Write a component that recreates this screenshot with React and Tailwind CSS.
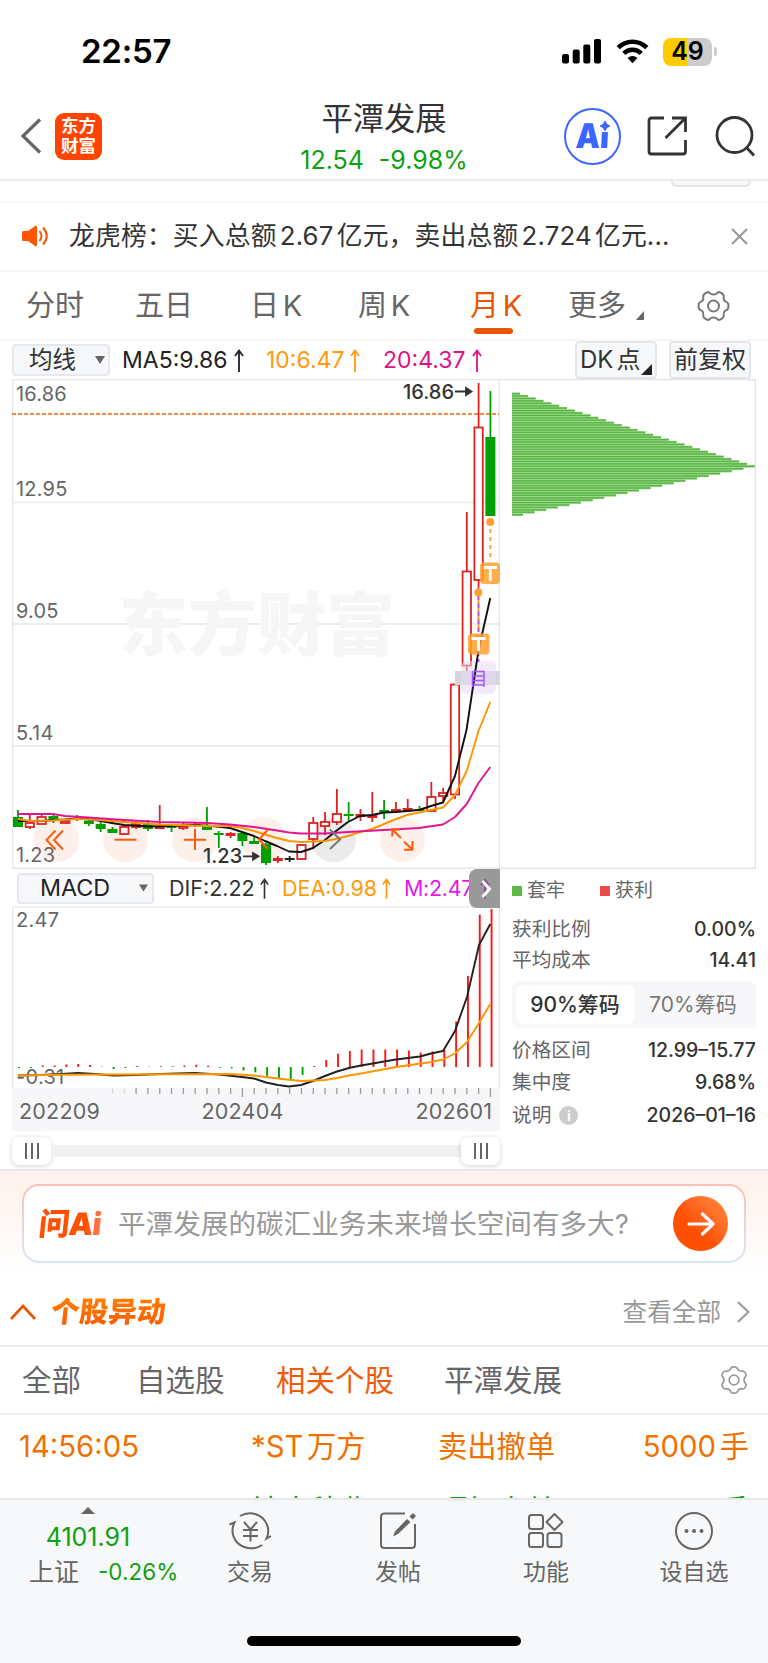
import React from 'react';

// [wick top, body top, body bottom, wick bottom, kind]: u = hollow red, r = solid red, g = green, k = flat
const CANDLES = [
    [810, 817, 827, 827, 'g'], [814, 823, 827, 829, 'u'], [814, 817, 824, 824, 'u'], [815, 816, 821, 823, 'g'],
    [820, 821, 823, 823, 'u'], [815, 818, 820, 821, 'g'], [820, 821, 824, 826, 'g'], [822, 824, 829, 832, 'g'],
    [827, 829, 833, 833, 'g'], [826, 827, 834, 834, 'u'], [820, 824, 827, 829, 'u'], [820, 824, 829, 831, 'g'],
    [805, 826, 829, 829, 'r'], [825, 826, 828, 832, 'g'], [822, 826, 828, 830, 'u'], [822, 824, 826, 827, 'r'],
    [807, 827, 830, 830, 'g'], [831, 833, 835, 848, 'g'], [832, 833, 836, 838, 'r'], [832, 833, 841, 846, 'g'],
    [837, 841, 844, 844, 'g'], [843, 844, 863, 865, 'g'], [856, 858, 861, 863, 'r'], [856, 858, 860, 862, 'k'],
    [844, 845, 859, 860, 'u'], [817, 823, 839, 849, 'u'], [812, 822, 826, 835, 'u'], [789, 814, 822, 825, 'u'],
    [802, 814, 816, 822, 'g'], [809, 814, 817, 821, 'r'], [792, 815, 818, 822, 'r'], [800, 810, 812, 819, 'g'],
    [802, 809, 812, 812, 'r'], [799, 808, 811, 811, 'r'], [806, 809, 811, 811, 'g'], [782, 797, 811, 812, 'u'],
    [788, 793, 796, 801, 'u'], [684, 684.5, 794.5, 799, 'u'], [512, 571.5, 665.5, 671, 'u'], [383, 427.5, 580, 587, 'u'],
    [391, 437, 516, 516, 'g'],
];

const MA5 = '18,821 40,821 65,819.5 77,818.5 95,820 112,823 124,825 150,826.5 171,826 195,825 212,826 230,828 242,832 254,836 265,841 277,846 289,851.5 301,852 313,848 325,840 336,831 348,822 360,816 372,815 384,812.5 396,812 419,810 431,806 443,802.5 455,776 466.5,730 478.5,650 490.3,598';
const MA10 = '18,819 30,821 53,820.5 77,819 100,820 124,822 160,824.5 207,826 230,826 242,828 254,831 265,834.5 277,838 289,841 301,842 325,841 336,839 348,836 360,832 372,829 384,824 396,819 407,815 419,812.5 431,810 443,807.5 455,795 466.7,771 478.5,731 490.3,702';
const MA20 = '18,814 53,814 65,816 88,817.5 124,820 160,822 207,823 230,824.5 254,827 277,830.5 289,832.5 301,833.5 325,833.5 348,832 384,830 419,828 443,824.5 455,817 466.7,804 478.5,783 490.3,767';

const MACD_BARS = [
    -1, -1, 1.5, 1.5, 2.5, 3, 2, 0.4, -2, -1, 1, 0.3, 0.7, 0.7, 1.5, 2.3, 1.3, -0.7, -1.3, -3.5, -5.3, -9.5, -12, -13, -8,
    1, 7, 13.3, 16, 17.5, 17.5, 17.5, 17.5, 16.5, 14.5, 15.5, 17, 45.5, 91, 152.5, 158,
];
const DIF = '18,1075.5 40,1075 62,1074 78,1073 95,1074 113,1075.5 136,1075 160,1074 195,1073 219,1074.5 242,1077 254,1078.5 266,1082.5 278,1085 289,1086.5 301,1085 313,1081 325,1076 337,1071.5 349,1068 361,1065.5 373,1063.5 384,1061.5 396,1059.5 420,1056.5 431,1053.5 443,1051 455,1031 467,997 479,945 490.3,924';
const DEA = '18,1075.5 60,1074.8 230,1074 254,1075.5 278,1078.5 301,1081 325,1080 337,1078 349,1075.5 361,1073.5 396,1067 431,1062 443,1059.5 455,1053.5 467,1042 479,1023 490.3,1004';

const STEP = 11.81;

const StatusBar = () => (
    <div className="flex h-[97px] shrink-0 items-center pl-[81px] pr-[51px] text-black">
        <span className="mt-[6px] text-[33px] font-semibold leading-none tracking-[-0.2px]">22:57</span>
        <div className="ml-auto mt-[6px] flex items-center">
            <svg className="h-[25px] w-[39px]" viewBox="0 0 39 25">
                <rect x="0" y="15" width="7" height="9.5" rx="2" />
                <rect x="10.7" y="10.5" width="7" height="14" rx="2" />
                <rect x="21.3" y="5.5" width="7" height="19" rx="2" />
                <rect x="32" y="0" width="7" height="24.5" rx="2" />
            </svg>
            <svg className="ml-[15px] h-[25px] w-[33px]" viewBox="0 0 33 25">
                <path d="M2.2 8.6a20.3 20.3 0 0 1 28.6 0" fill="none" stroke="black" strokeWidth="4.6" />
                <path d="M7.8 14.4a12.3 12.3 0 0 1 17.4 0" fill="none" stroke="black" strokeWidth="4.4" />
                <path d="M11.6 18.9a7 7 0 0 1 9.8 0L16.5 24.3z" />
            </svg>
            <div className="ml-[14px] flex h-[28px] w-[49px] items-center justify-center rounded-[8px] bg-linear-to-r from-[#ffcc00] from-50% to-[#cccccc] to-50%">
                <span className="text-[25px] font-semibold leading-none">49</span>
            </div>
            <span className="ml-[2px] h-[9px] w-[3px] rounded-r-full bg-[#cccccc]"></span>
        </div>
    </div>
);

const Header = () => (
    <div className="flex h-[84px] shrink-0 items-center border-b-2 border-[#ededee] pb-[4px] pl-[20px] pr-[11px] text-[#333333]">
        <svg className="h-[36px] w-[22px]" viewBox="0 0 22 36" fill="none" stroke="#666666" strokeWidth="3.2">
            <path d="M20 1.5L3 18l17 16.5" />
        </svg>
        <div className="ml-[13px] flex h-[47px] w-[47px] flex-col items-center justify-center rounded-[9px] bg-[#ff4400] text-[17.500px] font-bold leading-[20px] text-white">
            <span>东方</span>
            <span>财富</span>
        </div>
        <div className="ml-[198px] mt-[5px] flex w-[168px] flex-col items-center">
            <span className="text-[31.3px] leading-[38px]">平潭发展</span>
            <span className="mt-[5px] flex gap-[15px] whitespace-nowrap text-[25px] leading-[34px] text-[#0fa00f]">
                <span>12.54</span>
                <span>-9.98%</span>
            </span>
        </div>
        <div className="relative ml-[96px] flex h-[57px] w-[57px] items-center justify-center rounded-full border-[2.5px] border-[#3b66ff] text-[#3b66ff]">
            <span className="-skew-x-3 scale-x-90 text-[34px] font-black leading-none">Ai</span>
            <svg className="absolute left-[33px] top-[10px] h-[12px] w-[12px]" viewBox="0 0 12 12">
                <rect width="12" height="12" fill="white" />
                <path d="M6 1q1 4 5 5q-4 1-5 5q-1-4-5-5q4-1 5-5z" fill="#3b66ff" stroke="#3b66ff" />
            </svg>
        </div>
        <svg className="ml-[26px] h-[40px] w-[41px]" viewBox="0 0 41 40" fill="none" stroke="#333333" strokeWidth="2.8">
            <path d="M17 2H4.500Q2 2 2 4.500V35.500Q2 38 4.500 38H36Q38.500 38 38.500 35.500V24" />
            <path d="M25 2h13.500v14M38.500 2L18.500 22" />
        </svg>
        <svg className="ml-[27px] h-[41px] w-[41px]" viewBox="0 0 41 41" fill="none" stroke="#333333" strokeWidth="2.8">
            <circle cx="19.500" cy="19" r="17.500" />
            <path d="M31.500 31.500L39 39.500" />
        </svg>
    </div>
);

const Notice = () => (
    <div className="flex h-[91px] shrink-0 flex-col">
        <div className="flex h-[20px] justify-end pr-[17px]">
            <div className="h-[6px] w-[80px] rounded-b-[6px] border-2 border-t-0 border-[#e3e5eb] bg-[#f7f8fa]"></div>
        </div>
        <div className="flex h-[71px] items-center border-y-2 border-[#f6f6f7] pb-[1px] pl-[22px] pr-[20px]">
            <svg className="h-[22px] w-[27px]" viewBox="0 0 27 22" fill="#ff5500">
                <path d="M0 7.500Q0 6 1.500 6H6L13 1q2-1 2 1v18q0 2-2 1L6 16H1.500Q0 16 0 14.500z" />
                <path d="M17.500 6q4 5 0 10M21 2.500q7.500 8.500 0 17" fill="none" stroke="#ff5500" strokeWidth="2" />
            </svg>
            <span className="ml-[20px] text-[25.8px] tracking-[0.15px] text-[#333333] [text-autospace:normal]">龙虎榜：买入总额2.67亿元，卖出总额2.724亿元...</span>
            <svg className="ml-auto h-[17px] w-[17px]" viewBox="0 0 17 17" stroke="#999999" strokeWidth="2">
                <path d="M1 1l15 15M16 1L1 16" />
            </svg>
        </div>
    </div>
);

const Gear = ({ className, stroke }) => (
    <svg className={className} viewBox="0 0 32 32" fill="none" stroke={stroke} strokeWidth="2" strokeLinejoin="round">
        <path d="M16 4.500Q18.500 4.500 20 2.800Q21.200 1.600 23 2.600L25 3.900Q26.600 5 26.200 7Q25.800 9.500 27.500 11.200Q30.500 12.500 30.800 14Q31 16 30.800 18Q30.500 19.500 27.500 20.800Q25.800 22.500 26.200 25Q26.600 27 25 28.100L23 29.400Q21.200 30.400 20 29.200Q18.500 27.500 16 27.500Q13.500 27.500 12 29.200Q10.800 30.400 9 29.400L7 28.100Q5.400 27 5.800 25Q6.200 22.500 4.500 20.800Q1.500 19.500 1.200 18Q1 16 1.200 14Q1.500 12.500 4.500 11.200Q6.200 9.500 5.800 7Q5.400 5 7 3.900L9 2.600Q10.800 1.600 12 2.800Q13.500 4.500 16 4.500z" />
        <circle cx="16" cy="16" r="5.500" />
    </svg>
);

const PeriodTabs = () => (
    <div className="flex h-[69px] shrink-0 items-center border-b-2 border-[#f6f6f7] pl-[26px] text-[29px] text-[#666666] [text-autospace:normal]">
        <span className="w-[109px]">分时</span>
        <span className="w-[115px]">五日</span>
        <span className="w-[108px]">日K</span>
        <span className="w-[112px]">周K</span>
        <span className="relative w-[98px] text-[#ea5504]">
            月K
            <span className="absolute left-[4px] top-[44px] h-[6px] w-[39px] rounded-[3px] bg-[#ea5504]"></span>
        </span>
        <span>更多</span>
        <svg className="ml-[10px] mt-[20px] h-[9px] w-[8px]" viewBox="0 0 8 9" fill="#666666">
            <path d="M8 0v9H0z" />
        </svg>
        <Gear className="ml-[53px] h-[32px] w-[33px]" stroke="#777777" />
    </div>
);

const UpArrow = ({ className }) => (
    <svg className={className} viewBox="0 0 10 23" fill="none" stroke="currentColor" strokeWidth="1.8">
        <path d="M5 23V1.500M1 7l4-5.500L9 7" />
    </svg>
);

const AverageRow = () => (
    <div className="flex h-[38px] shrink-0 pl-[12px] pr-[16px] text-[23px] [text-autospace:normal]">
        <div className="mt-[3px] flex h-[32px] w-[98px] shrink-0 items-center rounded-[4px] border-2 border-[#e6e8ee] bg-[#f7f8fa] pl-[15px] text-[23.500px] text-[#333333]">
            均线
            <svg className="ml-[19px] h-[8px] w-[10px]" viewBox="0 0 10 8" fill="#666666">
                <path d="M0 0h10L5 8z" />
            </svg>
        </div>
        <div className="flex w-[453px] shrink-0 items-center pl-[12px]">
            <span className="w-[112px] text-[#222222]">MA5:9.86</span>
            <UpArrow className="h-[23px] w-[10px] text-[#222222]" />
            <span className="ml-[22px] w-[84px] text-[#ff9a0c]">10:6.47</span>
            <UpArrow className="h-[23px] w-[10px] text-[#ff9a0c]" />
            <span className="ml-[23px] w-[89px] text-[#dd1188]">20:4.37</span>
            <UpArrow className="h-[23px] w-[10px] text-[#dd1188]" />
        </div>
        <div className="relative ml-[12px] flex w-[82px] shrink-0 items-center whitespace-nowrap rounded-[4px] border-2 border-[#e3e5eb] bg-[#f7f8fa] pl-[3px] text-[24px] text-[#333333]">
            DK点
            <svg className="absolute bottom-[2px] right-[3px] h-[11px] w-[11px]" viewBox="0 0 11 11" fill="#222222">
                <path d="M11 0v11H0z" />
            </svg>
        </div>
        <div className="ml-[12px] flex w-[82px] shrink-0 items-center justify-center whitespace-nowrap rounded-[4px] border-2 border-[#e3e5eb] bg-[#f7f8fa] text-[24px] text-[#333333]">前复权</div>
    </div>
);

const Candle = ({ data, x }) => {
    const [top, bodyTop, bodyBottom, bottom, kind] = data;
    const color = kind === 'g' ? '#009f00' : kind === 'k' ? '#222222' : '#dd2222';
    return (
        <g stroke={color} strokeWidth="1.800">
            <path d={`M${x} ${top}V${bodyTop}M${x} ${bodyBottom}V${bottom}`} />
            {kind === 'u' ? (
                <rect x={x - 4.2} y={bodyTop} width="8.400" height={bodyBottom - bodyTop} fill="white" />
            ) : (
                <rect x={x - 5} y={bodyTop} width="10" height={bodyBottom - bodyTop} fill={color} stroke="none" />
            )}
        </g>
    );
};

const PriceChart = () => (
    <svg className="h-[490px] w-[488px] shrink-0 text-[20px]" viewBox="12 379 488 490">
        <g stroke="#e4e9ef" strokeWidth="1.600" fill="none">
            <path d="M12 379.500H500M12.500 379V869M499.500 379V869M12 868.300H500" />
            <path d="M12 502.500H500M12 624H500M12 746H500" />
        </g>
        <text x="119" y="650" fontSize="69" fontWeight="900" fill="#f6f6f7">东方财富</text>
        <path d="M12 414H499" stroke="#f08a4b" strokeWidth="2" strokeDasharray="4 2" />
        <g fill="#fdf0ea">
            <circle cx="56.500" cy="839.700" r="22.500" />
            <circle cx="125.500" cy="839.700" r="22.500" />
            <circle cx="194.500" cy="839.700" r="22.500" />
            <circle cx="264" cy="839.700" r="22.500" />
            <circle cx="333.500" cy="839.700" r="22.500" fill="#ebebeb" />
            <circle cx="402.500" cy="839.700" r="22.500" />
        </g>
        <g fill="#666666" letterSpacing="0.200">
            <text x="16" y="401">16.86</text>
            <text x="16" y="495.500">12.95</text>
            <text x="16" y="617.500">9.05</text>
            <text x="16" y="740">5.14</text>
            <text x="16" y="861.500">1.23</text>
        </g>
        {CANDLES.map((c, i) => (
            <Candle key={i} data={c} x={18 + i * STEP} />
        ))}
        <rect x="455" y="671" width="44.500" height="14" fill="#d3d6dc" />
        <rect x="461" y="661" width="35" height="33" rx="6" fill="#e9d9fb" fillOpacity="0.550" />
        <path d="M478.500 587V662" stroke="#a855f7" strokeWidth="2" strokeDasharray="5 3" />
        <path d="M478.500 600V630M490.300 529V560" stroke="#ffa02e" strokeWidth="2" strokeDasharray="4 4" />
        <g fill="none" strokeWidth="1.900" strokeLinejoin="round">
            <polyline points={MA5} stroke="#111111" />
            <polyline points={MA10} stroke="#ff9500" />
            <polyline points={MA20} stroke="#e01590" />
        </g>
        <g fill="#ff9f2e">
            <circle cx="490.300" cy="522" r="4" />
            <circle cx="478.300" cy="592.500" r="4" />
            <rect x="480" y="562.500" width="20" height="21.500" rx="4" fillOpacity="0.850" />
            <rect x="468" y="633.500" width="21.500" height="21" rx="4" fillOpacity="0.850" />
        </g>
        <g stroke="white" strokeWidth="2.800" fill="none">
            <path d="M483.500 567.500H497M490.300 567.500V581" />
            <path d="M471.500 638.500H485.500M478.500 638.500V651" />
        </g>
        <path d="M472.500 671.500H484V687M472.500 671.500V687M472.500 676H484M472.500 680.500H484M472.500 685H484" stroke="#a855f7" strokeWidth="1.500" fill="none" />

        {/* Chart controls */}
        <g stroke="#ff5a0a" strokeWidth="2" fill="none">
            <path d="M55.500 830.500L46.500 840L55.500 849.500M63 830.500L54 840L63 849.500" />
            <path d="M114.500 839.700H136.500" />
            <path d="M184 839.700H206M195 829V850" />
            <path d="M268 829.500L259 839.500L268 849" />
            <path d="M392.300 836.500V829.500H400M392.300 829.500L401 838M412.500 841V849.700H404M412.500 849.700L404 841.500" />
        </g>
        <path d="M330 829.500L340 839.500L330 849" stroke="#777777" strokeWidth="2" fill="none" />

        <g fill="#333333" stroke="none" className="font-medium">
            <text x="403" y="399">16.86</text>
            <text x="203" y="863">1.23</text>
        </g>
        <g stroke="#333333" strokeWidth="1.800" fill="#333333">
            <path d="M455 391.500H471M466 388l5.500 3.500l-5.500 3.500z" />
            <path d="M243 856.300H258M253 853l5.500 3.300l-5.500 3.300z" />
        </g>
    </svg>
);

// 51 price levels; volume peaks at level 30
const ChipChart = () => (
    <svg className="h-[490px] w-[256px] shrink-0" viewBox="500 379 256 490">
        <path d="M500 379.500H755.500V868.300H500" fill="none" stroke="#e0e3e9" strokeWidth="1.600" />
        {Array.from({ length: 51 }, (_, i) => {
            const width = i <= 30 ? 8 + i * 7.83 : 243 - (i - 30) * 11.6;
            const y = 392.5 + i * 2.42;
            return (
                <g key={i}>
                    <rect x="512" y={y} width={width} height="2.420" fill="#82cb6f" />
                    <rect x="512" y={y + 0.6} width={width} height="1.100" fill="#56b541" />
                </g>
            );
        })}
    </svg>
);

const MacdRow = () => (
    <div className="relative flex h-[39px] items-center border-b-2 border-[#efeff1] pt-[1px] text-[21.500px]">
        <div className="ml-[5px] flex h-[31px] w-[137px] shrink-0 items-center rounded-[4px] border-2 border-[#e6e8ee] bg-[#f7f8fa] pl-[21px] text-[23.300px] text-[#222222]">
            MACD
            <svg className="ml-auto mr-[4px] h-[8px] w-[9px]" viewBox="0 0 10 8" fill="#666666">
                <path d="M0 0h10L5 8z" />
            </svg>
        </div>
        <span className="ml-[15px] w-[91px] shrink-0 text-[#333333]">DIF:2.22</span>
        <UpArrow className="h-[21px] w-[9px] shrink-0 text-[#333333]" />
        <span className="ml-[13px] w-[100px] shrink-0 text-[#ff9a0c]">DEA:0.98</span>
        <UpArrow className="h-[21px] w-[9px] shrink-0 text-[#ff9a0c]" />
        <span className="ml-[13px] w-[75px] shrink-0 tracking-[-0.3px] text-[#e517e5]">M:2.47</span>
        <div className="absolute right-0 top-0 flex h-[39px] w-[31px] items-center justify-center rounded-l-[8px] bg-[#999999]">
            <svg className="h-[23px] w-[22px]" viewBox="0 0 22 23" fill="none">
                <path d="M11 22V3M7 8l4-5l4 5" stroke="#8a4a8f" strokeWidth="1.8" />
                <path d="M8.500 4l7 8l-7 8" stroke="white" strokeWidth="3" />
            </svg>
        </div>
    </div>
);

const MacdChart = () => (
    <svg className="h-[223px] w-[488px] shrink-0" viewBox="12 908 488 223">
        <path d="M12.500 907V1088M499.500 907V1088" stroke="#e4e6eb" strokeWidth="1.600" />
        <rect x="12" y="1088" width="488" height="43" fill="#f7f7fa" />
        {MACD_BARS.map((v, i) => (
            <rect key={i} x={18.2 + i * STEP} y={v > 0 ? 1067 - v : 1067} width="1.900" height={Math.abs(v)} fill={v > 0 ? '#ff1414' : '#009f00'} />
        ))}
        <g fill="#666666" fontSize="20" letterSpacing="0.300">
            <text x="16" y="926.500">2.47</text>
            <text x="16" y="1083.500">-0.31</text>
        </g>
        <g fill="none" strokeWidth="1.900" strokeLinejoin="round">
            <polyline points={DIF} stroke="#222222" />
            <polyline points={DEA} stroke="#ff9500" />
        </g>
        {Array.from({ length: 33 }, (_, i) => {
            const long = i === 11 || i === 32;
            return <path key={i} d={`M${112.5 + i * STEP} 1088v${long ? 9 : 6}`} stroke={i < 2 ? '#dddddd' : '#999999'} strokeWidth="1.300" />;
        })}
        <g fill="#666666" fontSize="21.500" letterSpacing="0.200">
            <text x="19" y="1119">202209</text>
            <text x="201.500" y="1119">202404</text>
            <text x="415.500" y="1119">202601</text>
        </g>
    </svg>
);

const SliderHandle = () => (
    <div className="flex h-[28px] w-[39px] items-center justify-center gap-[4px] rounded-[7px] bg-white shadow-[0_1px_5px_rgba(0,0,0,0.18)]">
        <span className="h-[16px] w-[2px] bg-[#666666]"></span>
        <span className="h-[16px] w-[2px] bg-[#666666]"></span>
        <span className="h-[16px] w-[2px] bg-[#666666]"></span>
    </div>
);

const StatRow = ({ label, value, info, className }) => (
    <div className={`flex items-center justify-between text-[19.700px] ${className}`}>
        <span className="flex items-center text-[#666666]">
            {label}
            {info && <span className="ml-[8px] flex h-[19px] w-[19px] items-center justify-center rounded-full bg-[#cccccc] text-[14px] font-bold text-white">i</span>}
        </span>
        <span className="text-[19.500px] font-medium text-[#333333]">{value}</span>
    </div>
);

const ChipStats = () => (
    <div className="flex w-[244px] flex-col pt-[9px]">
        <div className="flex h-[26px] items-center text-[19px] text-[#666666]">
            <span className="h-[10px] w-[10px] bg-[#5cb947]"></span>
            <span className="ml-[5px]">套牢</span>
            <span className="ml-[35px] h-[10px] w-[10px] bg-[#ea4a4a]"></span>
            <span className="ml-[5px]">获利</span>
        </div>
        <StatRow label="获利比例" value="0.00%" className="mt-[10px] h-[31px]" />
        <StatRow label="平均成本" value="14.41" className="h-[31px]" />
        <div className="mt-[5px] flex h-[47px] items-center rounded-[8px] bg-[#f7f7fa] p-[4px] text-[21px]">
            <span className="flex h-full w-[118px] items-center justify-center rounded-[6px] bg-white font-medium text-[#333333]">90%筹码</span>
            <span className="flex grow justify-center text-[#777777]">70%筹码</span>
        </div>
        <StatRow label="价格区间" value="12.99–15.77" className="mt-[7px] h-[32px]" />
        <StatRow label="集中度" value="9.68%" className="h-[31px]" />
        <StatRow label="说明" value="2026–01–16" info className="mt-[1px] h-[33px]" />
    </div>
);

const Charts = () => (
    <div className="flex h-[792px] shrink-0 flex-col border-b-2 border-[#e9e9ec] pl-[12px]">
        <div className="flex h-[490px]">
            <PriceChart />
            <ChipChart />
        </div>
        <div className="flex">
            <div className="flex w-[488px] flex-col">
                <MacdRow />
                <MacdChart />
                <div className="mt-[6px] flex items-center">
                    <SliderHandle />
                    <span className="h-[12px] grow bg-[#f1f1f4]"></span>
                    <SliderHandle />
                </div>
            </div>
            <div className="ml-[12px]">
                <ChipStats />
            </div>
        </div>
    </div>
);

const AskBar = () => (
    <div className="h-[106px] shrink-0 bg-linear-to-b from-[#fff1ec] to-white px-[22px] pt-[13px]">
        <div className="h-[79px] rounded-[17px] bg-linear-to-b from-[#ffbfb5] to-[#dbe4f8] p-[2px]">
            <div className="flex h-full items-center rounded-[15px] bg-white pl-[15px] pr-[16px]">
                <span className="w-[79px] -skew-x-6 bg-linear-to-r from-[#ff4f00] from-60% to-[#ffa37a] bg-clip-text text-[31px] font-black leading-[38px] tracking-[-1px] text-transparent">问Ai</span>
                <span className="mt-[3px] whitespace-nowrap text-[27.600px] text-[#999999]">平潭发展的碳汇业务未来增长空间有多大?</span>
                <span className="ml-auto flex h-[55px] w-[55px] items-center justify-center rounded-full bg-linear-to-tr from-[#ff4f00] from-40% to-[#ff8c3f]">
                    <svg className="h-[24px] w-[28px]" viewBox="0 0 28 24" fill="none" stroke="white" strokeWidth="3.200" strokeLinecap="round" strokeLinejoin="round">
                        <path d="M2 12h24M15.500 2L26 12L15.500 22" />
                    </svg>
                </span>
            </div>
        </div>
    </div>
);

const MovesHeader = () => (
    <div className="flex h-[70px] shrink-0 items-center border-b-2 border-[#ededee] pl-[10px] pr-[18px] pt-[1px]">
        <svg className="h-[16px] w-[26px]" viewBox="0 0 26 16" fill="none" stroke="#ea5504" strokeWidth="2.600">
            <path d="M1 15L13 2l12 13" />
        </svg>
        <span className="ml-[15px] -skew-x-6 bg-linear-to-b from-[#ff8800] to-[#ff4d00] bg-clip-text text-[28.700px] font-black text-transparent">个股异动</span>
        <span className="ml-auto mt-[1px] text-[24.600px] text-[#999999]">查看全部</span>
        <svg className="ml-[16px] h-[22px] w-[13px]" viewBox="0 0 13 22" fill="none" stroke="#999999" strokeWidth="2">
            <path d="M1 1l10.500 10L1 21" />
        </svg>
    </div>
);

const MovesTabs = () => (
    <div className="flex h-[68px] shrink-0 items-center border-b-2 border-[#f1f1f2] pl-[22px] text-[29.500px] text-[#666666]">
        <span className="mt-[1px] w-[114px]">全部</span>
        <span className="mt-[1px] w-[140px]">自选股</span>
        <span className="mt-[1px] w-[168px] text-[#f05a0a]">相关个股</span>
        <span className="mt-[1px] w-[276px]">平潭发展</span>
        <Gear className="h-[28px] w-[28px] rotate-90" stroke="#999999" />
    </div>
);

const MoveRow = ({ time, name, event, volume, className }) => (
    <div className={`flex h-[64px] shrink-0 items-center whitespace-nowrap text-[29.300px] [text-autospace:normal] ${className}`}>
        <span className="w-[251px] pl-[19px]">{time}</span>
        <span className="w-[187px]">{name}</span>
        <span>{event}</span>
        <span className="ml-auto pr-[19px]">{volume}</span>
    </div>
);

const NavItem = ({ label, children }) => (
    <div className="flex w-[148px] shrink-0 flex-col items-center pt-[11px]">
        <svg className="h-[40px] w-[44px]" viewBox="0 0 44 40" fill="none" stroke="#666666" strokeWidth="2">
            {children}
        </svg>
        <span className="mt-[4px] text-[23px] leading-[34px] text-[#666666]">{label}</span>
    </div>
);

const BottomNav = () => (
    <div className="flex h-[165px] shrink-0 flex-col border-t-2 border-[#e6e7e9] bg-[#f7f8fa]">
        <div className="flex">
            <div className="flex w-[176px] shrink-0 flex-col items-center pt-[7px]">
                <svg className="h-[7px] w-[14px]" viewBox="0 0 14 7" fill="#666666">
                    <path d="M7 0l7 7H0z" />
                </svg>
                <span className="mt-[6px] text-[25px] leading-[34px] text-[#0fa00f]">4101.91</span>
                <span className="flex items-center self-start whitespace-nowrap pl-[29px] pt-[1px] text-[25px] leading-[34px] text-[#666666]">
                    上证
                    <span className="ml-[19px] text-[22.500px] text-[#0fa00f]">-0.26%</span>
                </span>
            </div>
            <NavItem label="交易">
                <path d="M12 5Q20 0.500 28.500 3.500A17.500 17.500 0 0 1 38.500 27.500l4.500-2.500M34 34Q26 39.500 16 36A17.500 17.500 0 0 1 6.500 11.500l-5 2" />
                <path d="M16 11l6.500 7.500l6.500-7.500M15 19h15M15 25h15M22.500 18.500v12" />
            </NavItem>
            <NavItem label="发帖">
                <path d="M29 2.500H8.500Q5 2.500 5 6V33.500Q5 37 8.500 37H35.500Q39 37 39 33.500V13" />
                <path d="M17 25.500L19 20.500L31 8L34.500 11L22 23z" fill="#666666" stroke="none" />
                <path d="M35 7L38.500 3.500" strokeWidth="4.500" />
            </NavItem>
            <NavItem label="功能">
                <rect x="5" y="4" width="14" height="14" rx="2.500" />
                <rect x="5" y="22" width="14" height="14" rx="2.500" />
                <rect x="23.500" y="22" width="14" height="14" rx="2.500" />
                <path d="M30.500 3l8 8l-8 8l-8-8z" strokeLinejoin="round" />
            </NavItem>
            <NavItem label="设自选">
                <circle cx="22" cy="20" r="18" />
                <g fill="#666666" stroke="none">
                    <circle cx="14.500" cy="20" r="2" />
                    <circle cx="22" cy="20" r="2" />
                    <circle cx="29.500" cy="20" r="2" />
                </g>
            </NavItem>
        </div>
        <div className="mx-auto mb-[17px] mt-auto h-[10px] w-[274px] rounded-full bg-black"></div>
    </div>
);

const App = () => {
    return (
        <div className="flex h-[1663px] w-[768px] flex-col overflow-hidden bg-white font-['Inter','Noto_Sans_CJK_SC',sans-serif]">
            <StatusBar />
            <Header />
            <Notice />
            <PeriodTabs />
            <AverageRow />
            <Charts />
            <AskBar />
            <MovesHeader />
            <MovesTabs />
            <div className="flex h-[83px] shrink-0 flex-col overflow-hidden">
                <MoveRow time="14:56:05" name="*ST万方" event="卖出撤单" volume="5000手" className="text-[#f07000]" />
                <MoveRow time="" name="神农种业" event="顶级卖单" volume="手" className="text-[#0fa00f]" />
            </div>
            <BottomNav />
        </div>
    );
};

export default App;
